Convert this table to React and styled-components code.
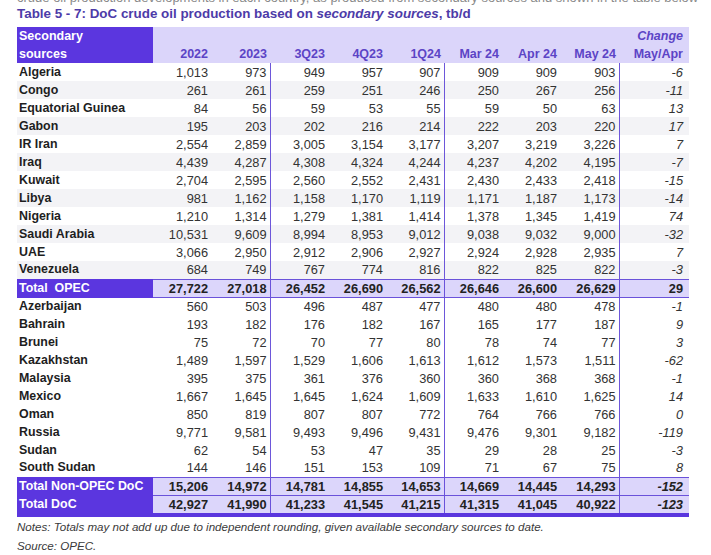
import * as React from 'react'
import styled, { createGlobalStyle } from 'styled-components'

const GlobalStyle = createGlobalStyle`
  html, body {
    margin: 0;
    padding: 0;
    background: #ffffff;
  }
  body {
    font-family: "Liberation Sans", Arial, sans-serif;
    color: #222;
  }
`

const Page = styled.div`
  width: 711px;
  height: 555px;
  overflow: hidden;
  padding-left: 17px;
  box-sizing: border-box;
`

const CutLine = styled.div`
  height: 5px;
  overflow: hidden;
  color: #8a8a8a;
  font-size: 13px;
  white-space: nowrap;
  span {
    display: block;
    margin-top: -9px;
    line-height: 14px;
  }
`

const Title = styled.h1`
  margin: 1px 0 5px;
  font-size: 13.4px;
  line-height: 16px;
  font-weight: 700;
  color: #4d3ba8;
  em {
    font-style: italic;
  }
`

const Table = styled.table`
  width: 672px;
  table-layout: fixed;
  border-collapse: collapse;
  border-bottom: 4px solid #5a36de;
`

const HeadCorner = styled.th`
  background: #5b36df;
  color: #ffffff;
  font-size: 12.5px;
  font-weight: 700;
  text-align: left;
  line-height: 18px;
  padding: 0 0 0 2px;
  height: 36px;
  vertical-align: bottom;
`

const HeadCell = styled.th`
  background: #dbd5fa;
  color: #5c44c6;
  font-size: 12.5px;
  font-weight: 700;
  text-align: right;
  line-height: 18px;
  padding: 0 ${(p) => (p.$wide ? 6 : 3)}px 0 0;
  vertical-align: bottom;
  white-space: nowrap;
  em {
    font-style: italic;
  }
`

const Row = styled.tr`
  height: 18px;
  background: ${(p) => (p.$striped ? '#f3f3f6' : '#ffffff')};
`

const Name = styled.td`
  font-size: 12.4px;
  font-weight: 700;
  color: #1e1e1e;
  padding: 0 0 0 2px;
  white-space: nowrap;
  line-height: 17px;
`

const Num = styled.td`
  font-size: 12.8px;
  color: #333;
  text-align: right;
  padding: 0 ${(p) => (p.$change ? 6 : 3)}px 0 0;
  line-height: 17px;
  font-style: ${(p) => (p.$change ? 'italic' : 'normal')};
  border-left: ${(p) => (p.$divider ? '1.5px solid #6d57da' : 'none')};
`

const TotalRow = styled.tr`
  height: 18px;
`

const TotalName = styled.td`
  background: #5b36df;
  color: #ffffff;
  font-size: 12.4px;
  font-weight: 700;
  padding: 0 0 0 2px;
  white-space: pre;
  line-height: 17px;
  border-top: 1.5px solid #5b36df;
  border-bottom: 1.5px solid #5b36df;
`

const TotalNum = styled.td`
  background: #dcd6fb;
  color: #222;
  font-size: 12.8px;
  font-weight: 700;
  text-align: right;
  padding: 0 ${(p) => (p.$change ? 6 : 3)}px 0 0;
  line-height: 17px;
  font-style: ${(p) => (p.$italic ? 'italic' : 'normal')};
  border-top: 1.5px solid #6a52da;
  border-bottom: 1.5px solid #6a52da;
  border-left: ${(p) => (p.$divider ? '1.5px solid #6a52da' : 'none')};
`

const Notes = styled.div`
  margin-top: 0;
  font-size: 11.6px;
  font-style: italic;
  color: #3a3a3a;
  line-height: 19px;
`

const widths = [136, 58, 59, 58, 58, 58, 58, 58, 59, 70]
const heads = ['2022', '2023', '3Q23', '4Q23', '1Q24', 'Mar 24', 'Apr 24', 'May 24']
const dividers = [2, 5, 8]

const opec = [
  ['Algeria', '1,013', '973', '949', '957', '907', '909', '909', '903', '-6'],
  ['Congo', '261', '261', '259', '251', '246', '250', '267', '256', '-11'],
  ['Equatorial Guinea', '84', '56', '59', '53', '55', '59', '50', '63', '13'],
  ['Gabon', '195', '203', '202', '216', '214', '222', '203', '220', '17'],
  ['IR Iran', '2,554', '2,859', '3,005', '3,154', '3,177', '3,207', '3,219', '3,226', '7'],
  ['Iraq', '4,439', '4,287', '4,308', '4,324', '4,244', '4,237', '4,202', '4,195', '-7'],
  ['Kuwait', '2,704', '2,595', '2,560', '2,552', '2,431', '2,430', '2,433', '2,418', '-15'],
  ['Libya', '981', '1,162', '1,158', '1,170', '1,119', '1,171', '1,187', '1,173', '-14'],
  ['Nigeria', '1,210', '1,314', '1,279', '1,381', '1,414', '1,378', '1,345', '1,419', '74'],
  ['Saudi Arabia', '10,531', '9,609', '8,994', '8,953', '9,012', '9,038', '9,032', '9,000', '-32'],
  ['UAE', '3,066', '2,950', '2,912', '2,906', '2,927', '2,924', '2,928', '2,935', '7'],
  ['Venezuela', '684', '749', '767', '774', '816', '822', '825', '822', '-3'],
]

const nonOpec = [
  ['Azerbaijan', '560', '503', '496', '487', '477', '480', '480', '478', '-1'],
  ['Bahrain', '193', '182', '176', '182', '167', '165', '177', '187', '9'],
  ['Brunei', '75', '72', '70', '77', '80', '78', '74', '77', '3'],
  ['Kazakhstan', '1,489', '1,597', '1,529', '1,606', '1,613', '1,612', '1,573', '1,511', '-62'],
  ['Malaysia', '395', '375', '361', '376', '360', '360', '368', '368', '-1'],
  ['Mexico', '1,667', '1,645', '1,645', '1,624', '1,609', '1,633', '1,610', '1,625', '14'],
  ['Oman', '850', '819', '807', '807', '772', '764', '766', '766', '0'],
  ['Russia', '9,771', '9,581', '9,493', '9,496', '9,431', '9,476', '9,301', '9,182', '-119'],
  ['Sudan', '62', '54', '53', '47', '35', '29', '28', '25', '-3'],
  ['South Sudan', '144', '146', '151', '153', '109', '71', '67', '75', '8'],
]

function DataRow({ row, striped }) {
  const [name, ...values] = row
  return (
    <Row $striped={striped}>
      <Name>{name}</Name>
      {values.map((v, i) => (
        <Num key={i} $divider={dividers.includes(i)} $change={i === 8}>
          {v}
        </Num>
      ))}
    </Row>
  )
}

function TotalLine({ row }) {
  const [name, ...values] = row
  return (
    <TotalRow>
      <TotalName>{name}</TotalName>
      {values.map((v, i) => (
        <TotalNum
          key={i}
          $divider={dividers.includes(i)}
          $change={i === 8}
          $italic={i === 8 && v.startsWith('-')}
        >
          {v}
        </TotalNum>
      ))}
    </TotalRow>
  )
}

export default function App() {
  return (
    <Page>
      <GlobalStyle />
      <CutLine>
        <span>
          crude oil production developments in each country, as produced from secondary sources and shown in the table below
        </span>
      </CutLine>
      <Title>
        Table 5 - 7: DoC crude oil production based on <em>secondary sources</em>, tb/d
      </Title>
      <Table>
        <colgroup>
          {widths.map((w, i) => (
            <col key={i} style={{ width: w }} />
          ))}
        </colgroup>
        <thead>
          <tr>
            <HeadCorner>
              Secondary
              <br />
              sources
            </HeadCorner>
            {heads.map((h) => (
              <HeadCell key={h}>{h}</HeadCell>
            ))}
            <HeadCell $wide>
              <em>Change</em>
              <br />
              May/Apr
            </HeadCell>
          </tr>
        </thead>
        <tbody>
          {opec.map((r, i) => (
            <DataRow key={r[0]} row={r} striped={i % 2 === 1} />
          ))}
          <TotalLine
            row={['Total  OPEC', '27,722', '27,018', '26,452', '26,690', '26,562', '26,646', '26,600', '26,629', '29']}
          />
          {nonOpec.map((r) => (
            <DataRow key={r[0]} row={r} striped={false} />
          ))}
          <TotalLine
            row={['Total Non-OPEC DoC', '15,206', '14,972', '14,781', '14,855', '14,653', '14,669', '14,445', '14,293', '-152']}
          />
          <TotalLine
            row={['Total DoC', '42,927', '41,990', '41,233', '41,545', '41,215', '41,315', '41,045', '40,922', '-123']}
          />
        </tbody>
      </Table>
      <Notes>
        Notes: Totals may not add up due to independent rounding, given available secondary sources to date.
        <br />
        Source: OPEC.
      </Notes>
    </Page>
  )
}
